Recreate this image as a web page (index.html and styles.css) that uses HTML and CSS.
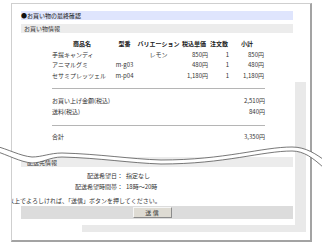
FILE: index.html
```html
<!DOCTYPE html>
<html lang="ja">
<head>
    <meta charset="UTF-8">
    <link rel="stylesheet" href="styles.css">
    <title>お買い物の最終確認</title>
</head>
<body>
    <div id="frame">
        <div class="body">
            <div class="main">
                <div class="title-bar">●お買い物の最終確認</div>
                <div class="section-bar">お買い物情報</div>

                <div class="items">
                    <table class="cart">
                        <tr>
                            <th class="c-name">商品名</th>
                            <th class="c-code">型番</th>
                            <th class="c-var">バリエーション</th>
                            <th class="c-price">税込単価</th>
                            <th class="c-qty">注文数</th>
                            <th class="c-sub">小計</th>
                        </tr>
                        <tr>
                            <td class="c-name">手提キャンディ</td>
                            <td class="c-code"></td>
                            <td class="c-var">レモン</td>
                            <td class="c-price">850円</td>
                            <td class="c-qty">1</td>
                            <td class="c-sub">850円</td>
                        </tr>
                        <tr>
                            <td class="c-name">アニマルグミ</td>
                            <td class="c-code">m-g03</td>
                            <td class="c-var"></td>
                            <td class="c-price">480円</td>
                            <td class="c-qty">1</td>
                            <td class="c-sub">480円</td>
                        </tr>
                        <tr>
                            <td class="c-name">セサミプレッツェル</td>
                            <td class="c-code">m-p04</td>
                            <td class="c-var"></td>
                            <td class="c-price">1,180円</td>
                            <td class="c-qty">1</td>
                            <td class="c-sub">1,180円</td>
                        </tr>
                    </table>

                    <hr class="rule first">
                    <div class="sum-row"><span>お買い上げ金額(税込)</span><span>2,510円</span></div>
                    <div class="sum-row"><span>送料(税込)</span><span>840円</span></div>
                    <hr class="rule second">
                    <div class="sum-row total"><span>合計</span><span>3,350円</span></div>
                </div>

                <div class="section-bar ship">配送先情報</div>
                <div class="ship-info">
                    <span class="label">配送希望日：</span><span>指定なし</span>
                    <span class="label">配送希望時間帯：</span><span>18時～20時</span>
                </div>

                <p class="notice">以上でよろしければ、「送信」ボタンを押してください。</p>
                <div class="send-bar">
                    <button class="send-btn">送 信</button>
                </div>
            </div>
            <div class="side"></div>
        </div>
        <div class="foot"></div>
    </div>

    <svg class="tear" width="322" height="243" viewBox="0 0 322 243">
        <path class="tear-fill" d="M-5,146 C8,149 20,156 32,157 C42,157 50,153 62,153 C100,154 130,159 161,160 C225,160 262,147 292,147 C306,147 316,154 327,162 L324,168 C313,158 304,151 292,151 C262,151 225,164 161,164 C130,163 100,158 62,157 C50,157 42,163 32,163 C20,162 8,155 -5,151 Z"/>
        <path class="tear-line" d="M-5,146 C8,149 20,156 32,157 C42,157 50,153 62,153 C100,154 130,159 161,160 C225,160 262,147 292,147 C306,147 316,154 327,162"/>
        <path class="tear-line" d="M-5,151 C8,155 20,162 32,163 C42,163 50,157 62,157 C100,158 130,163 161,164 C225,164 262,151 292,151 C304,151 313,158 324,168"/>
    </svg>
</body>
</html>
```

FILE: styles.css
```css
body {
    margin: 0;
    background-color: #fff;
    font-family: "Noto Sans CJK JP", "Noto Sans", sans-serif;
    font-size: 6px;
    color: #333;
}

#frame {
    margin: 3px 0 0 11px;
    width: 301px;
    height: 239px;
    box-sizing: border-box;
    border-style: solid;
    border-width: 1px 2px 2px 1px;
    border-color: #cfcfcf #a3a3a3 #a3a3a3 #cfcfcf;
    padding: 7px 0 0 9px;
    overflow: hidden;
}

.body {
    display: flex;
}

.main {
    width: 272px;
    padding-bottom: 6px;
}

.side {
    width: 11px;
    margin: 71px 0 0 2px;
    background-color: #e9e9e9;
}

.foot {
    margin-left: 61px;
    width: 224px;
    height: 7px;
    background-color: #e9e9e9;
}

.title-bar {
    height: 9px;
    line-height: 9px;
    background-color: #dfe5fd;
    color: #111;
}

.section-bar {
    margin-top: 4px;
    height: 9px;
    line-height: 9px;
    padding-left: 3px;
    background-color: #ececec;
}

.items {
    margin-left: 31px;
    width: 213px;
}

.cart {
    margin-top: 6px;
    width: 212px;
    border-collapse: collapse;
    table-layout: fixed;
}

.cart th, .cart td {
    padding: 0;
    height: 10.7px;
    line-height: 10.7px;
    white-space: nowrap;
}

.cart th {
    font-weight: bold;
    text-align: center;
    color: #222;
}

.c-name { width: 60px; text-align: left; }
.c-code { width: 25px; text-align: center; }
.c-var { width: 43px; text-align: center; }
.c-price { width: 28px; text-align: right; }
.c-qty { width: 22px; text-align: right; }
.c-sub { width: 34px; text-align: right; }

.cart td.c-qty {
    padding-right: 1px;
}

.rule {
    border: none;
    border-top: 1px solid #b5b5b5;
    margin: 0;
}

.rule.first {
    margin-top: 6px;
    margin-bottom: 6px;
}

.rule.second {
    margin-top: 8px;
    margin-bottom: 5px;
}

.sum-row {
    display: flex;
    justify-content: space-between;
    height: 11px;
    line-height: 11px;
}

.section-bar.ship {
    margin-top: 15px;
    height: 9px;
    padding: 1px 0 0 6px;
    line-height: 10px;
}

.ship-info {
    display: grid;
    grid-template-columns: 102px auto;
    column-gap: 3px;
    margin-top: 3px;
    line-height: 11px;
}

.ship-info .label {
    text-align: right;
}

.notice {
    margin: 4px 0 0 -13px;
    height: 10px;
    line-height: 10px;
    white-space: nowrap;
}

.send-bar {
    display: flex;
    justify-content: center;
    align-items: center;
    height: 13px;
    background-color: #dcdcdc;
}

.send-btn {
    width: 39px;
    height: 11px;
    padding: 0;
    margin-right: 10px;
    font-family: inherit;
    font-size: 6px;
    line-height: 9px;
    color: #333;
    background-color: #dedbd3;
    border: 1px solid;
    border-color: #f6f6f6 #8c8c8c #8c8c8c #f6f6f6;
}

.tear {
    position: absolute;
    left: 0;
    top: 0;
    pointer-events: none;
}

.tear-fill {
    fill: #fff;
}

.tear-line {
    fill: none;
    stroke: #555;
    stroke-width: 0.8;
}
```
